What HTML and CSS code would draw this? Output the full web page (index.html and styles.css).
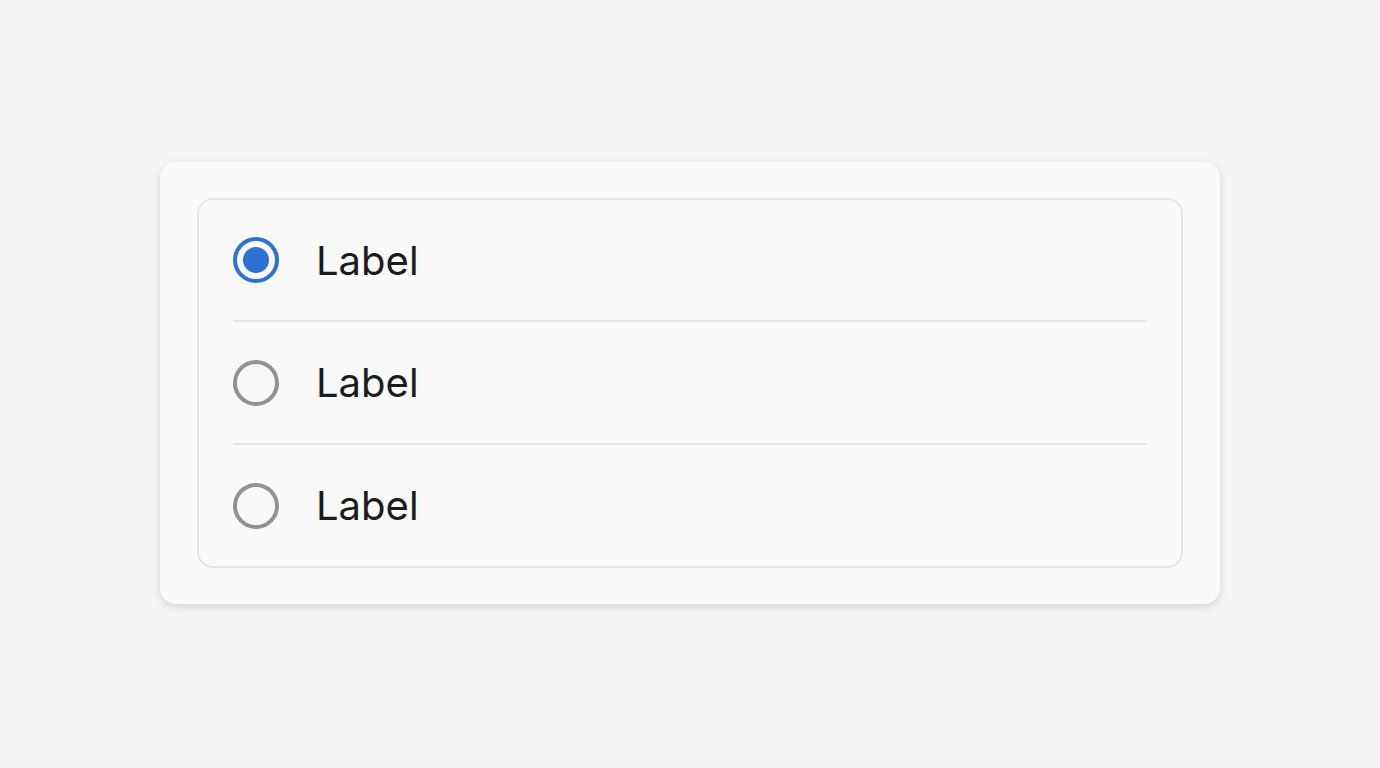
FILE: index.html
```html
<!DOCTYPE html>
<html>
<head>
<meta charset="utf-8">
<link rel="stylesheet" href="styles.css">
</head>
<body>
<div class="card">
  <div class="group">
    <label class="row">
      <span class="radio checked"><span class="dot"></span></span>
      <span class="text">Label</span>
    </label>
    <div class="divider"></div>
    <label class="row">
      <span class="radio"></span>
      <span class="text">Label</span>
    </label>
    <div class="divider"></div>
    <label class="row">
      <span class="radio"></span>
      <span class="text">Label</span>
    </label>
  </div>
</div>
</body>
</html>
```
FILE: styles.css
```css
html, body {
  margin: 0;
  height: 100%;
}
body {
  background: #f4f4f4;
  display: flex;
  align-items: center;
  justify-content: center;
  padding-bottom: 2px;
  box-sizing: border-box;
  font-family: Inter, "Liberation Sans", sans-serif;
}
.card {
  width: 1060px;
  box-sizing: border-box;
  padding: 36px 37px;
  background: #f9f9f9;
  border-radius: 16px;
  box-shadow: 0 3px 9px rgba(0, 0, 0, 0.13);
}
.group {
  border: 2px solid #e4e4e4;
  border-radius: 16px;
  padding: 0 34px;
}
.row {
  height: 120px;
  display: flex;
  align-items: center;
  gap: 37px;
}
.divider + .row {
  height: 121px;
}
.divider {
  height: 2px;
  background: #e6e6e6;
}
.radio {
  width: 46px;
  height: 46px;
  box-sizing: border-box;
  border: 4px solid #8e9398;
  border-radius: 50%;
  display: flex;
  align-items: center;
  justify-content: center;
  flex: none;
}
.radio.checked {
  border-color: #2e72d8;
}
.dot {
  width: 26px;
  height: 26px;
  border-radius: 50%;
  background: #2e72d8;
}
.text {
  font-size: 40px;
  font-weight: 400;
  color: #1c1c1c;
}
```
